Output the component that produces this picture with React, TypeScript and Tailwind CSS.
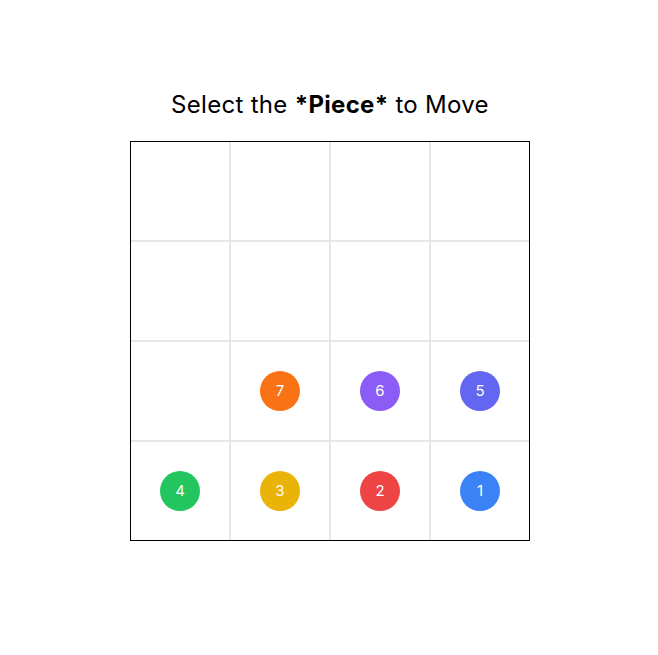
import React from "react";

const pieces: Record<string, { n: number; c: string }> = {
  "2-1": { n: 7, c: "bg-[#f97316]" },
  "2-2": { n: 6, c: "bg-[#8b5cf6]" },
  "2-3": { n: 5, c: "bg-[#6366f1]" },
  "3-0": { n: 4, c: "bg-[#22c55e]" },
  "3-1": { n: 3, c: "bg-[#eab308]" },
  "3-2": { n: 2, c: "bg-[#ef4444]" },
  "3-3": { n: 1, c: "bg-[#3b82f6]" },
};

export default function App() {
  const cells = [];
  for (let r = 0; r < 4; r++) {
    for (let c = 0; c < 4; c++) {
      const p = pieces[`${r}-${c}`];
      cells.push(
        <div
          key={`${r}-${c}`}
          className="w-[100px] h-[100px] border border-[#e5e7eb] flex items-center justify-center"
        >
          {p && (
            <div
              className={`w-10 h-10 rounded-full ${p.c} flex items-center justify-center text-white text-[15px]`}
            >
              {p.n}
            </div>
          )}
        </div>
      );
    }
  }
  return (
    <div
      className="w-[658px] h-[655px] bg-white flex flex-col items-center pt-[89px] pl-[2px]"
      style={{ fontFamily: "Inter, 'Noto Sans', sans-serif" }}
    >
      <h1 className="text-[24px] leading-[32px] tracking-[0.3px] text-black font-normal mb-[20px]">
        Select the <span className="font-bold">*Piece*</span> to Move
      </h1>
      <div className="w-[400px] h-[400px] border border-black overflow-hidden">
        <div className="-m-px w-[400px] h-[400px] grid grid-cols-[repeat(4,100px)] grid-rows-[repeat(4,100px)]">
          {cells}
        </div>
      </div>
    </div>
  );
}
